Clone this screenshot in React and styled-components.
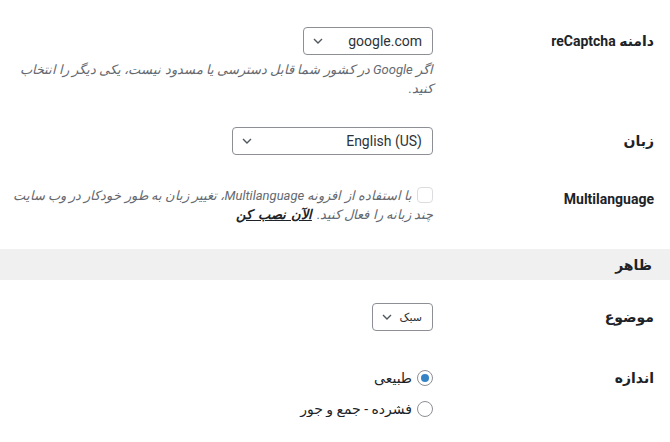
import React from 'react';
import styled, {createGlobalStyle} from 'styled-components';

const GlobalStyle = createGlobalStyle`
    html, body {
        margin: 0;
        padding: 0;
        background: #fff;
    }
    body {
        font-family: Roboto, "DejaVu Sans", sans-serif;
        color: #1d2327;
    }
`;

const Page = styled.div`
    width: 670px;
    direction: rtl;
`;

const Row = styled.div`
    display: grid;
    grid-template-columns: 237px 1fr;
    align-items: start;
    padding-top: ${p => p.$top}px;
`;

const Label = styled.div`
    padding-right: 16px;
    padding-top: ${p => p.$offset || 0}px;
    font-size: 14px;
    font-weight: 700;
    line-height: ${p => p.$lh}px;
    color: #1d2327;
    white-space: nowrap;
`;

const Field = styled.div`
    display: flex;
    flex-direction: column;
    align-items: flex-start;
    padding-left: 4px;
`;

const Select = styled.div`
    box-sizing: border-box;
    display: flex;
    align-items: center;
    justify-content: space-between;
    width: ${p => p.$width}px;
    height: 28px;
    padding: 0 10px 0 9px;
    border: 1px solid #8c8f94;
    border-radius: 4px;
    background: #fff;
    color: #2c3338;
    font-size: ${p => p.$small ? 11 : 14}px;
`;

const SelectValue = styled.span`
    direction: ${p => p.$ltr ? 'ltr' : 'rtl'};
    unicode-bidi: isolate;
`;

const Description = styled.p`
    margin: ${p => p.$gap || 0}px 0 0;
    max-width: ${p => p.$max || 405}px;
    font-size: 13px;
    font-style: italic;
    line-height: 19px;
    color: #646970;
`;

const Checkbox = styled.span`
    box-sizing: border-box;
    display: inline-block;
    width: 16px;
    height: 16px;
    margin-left: 5px;
    vertical-align: -3px;
    border: 1px solid #dcdcde;
    border-radius: 4px;
    background: #fff;
`;

const NowLink = styled.a`
    display: inline-block;
    margin-right: 5px;
    word-spacing: 2px;
    color: #1d2327;
    font-weight: 700;
    text-decoration: underline;
`;

const SectionBand = styled.div`
    display: flex;
    align-items: center;
    height: 31px;
    margin-top: 25px;
    padding-right: 18px;
    background: #f0f0f1;
    font-size: 14px;
    font-weight: 700;
    color: #1d2327;
`;

const RadioList = styled.div`
    display: flex;
    flex-direction: column;
    gap: 15px;
`;

const RadioRow = styled.label`
    display: flex;
    align-items: center;
    gap: 5px;
    height: 16px;
    font-size: 14px;
    color: #1d2327;
`;

const Radio = styled.span`
    box-sizing: border-box;
    display: flex;
    align-items: center;
    justify-content: center;
    width: 16px;
    height: 16px;
    border: 1px solid #8c8f94;
    border-radius: 50%;
    background: #fff;
    &::after {
        content: '';
        display: ${p => p.$checked ? 'block' : 'none'};
        width: 8px;
        height: 8px;
        border-radius: 50%;
        background: #3582c4;
    }
`;

const Chevron = () => (
    <svg width="10" height="6" viewBox="0 0 10 6">
        <polyline points="1,1 5,5 9,1" fill="none" stroke="#50575e" strokeWidth="1.4" />
    </svg>
);

export default function App() {
    return (
        <Page>
            <GlobalStyle />

            <Row $top={27}>
                <Label $lh={28}>دامنه reCaptcha</Label>
                <Field>
                    <Select $width={130}>
                        <SelectValue $ltr>google.com</SelectValue>
                        <Chevron />
                    </Select>
                    <Description $gap={5} $max={418}>
                        اگر Google در کشور شما قابل دسترسی یا مسدود نیست، یکی دیگر را انتخاب کنید.
                    </Description>
                </Field>
            </Row>

            <Row $top={29}>
                <Label $lh={28}>زبان</Label>
                <Field>
                    <Select $width={201}>
                        <SelectValue $ltr>English (US)</SelectValue>
                        <Chevron />
                    </Select>
                </Field>
            </Row>

            <Row $top={31}>
                <Label $lh={19} $offset={4}>Multilanguage</Label>
                <Field>
                    <Description $max={428}>
                        <Checkbox />
                        با استفاده از افزونه Multilanguage، تغییر زبان به طور خودکار در وب سایت چند زبانه را فعال کنید.
                        <NowLink href="#">الآن نصب کن</NowLink>
                    </Description>
                </Field>
            </Row>

            <SectionBand>ظاهر</SectionBand>

            <Row $top={23}>
                <Label $lh={28}>موضوع</Label>
                <Field>
                    <Select $width={61} $small>
                        <SelectValue>سبک</SelectValue>
                        <Chevron />
                    </Select>
                </Field>
            </Row>

            <Row $top={39}>
                <Label $lh={16}>اندازه</Label>
                <Field>
                    <RadioList>
                        <RadioRow>
                            <Radio $checked />
                            طبیعی
                        </RadioRow>
                        <RadioRow>
                            <Radio />
                            فشرده - جمع و جور
                        </RadioRow>
                    </RadioList>
                </Field>
            </Row>
        </Page>
    );
}
